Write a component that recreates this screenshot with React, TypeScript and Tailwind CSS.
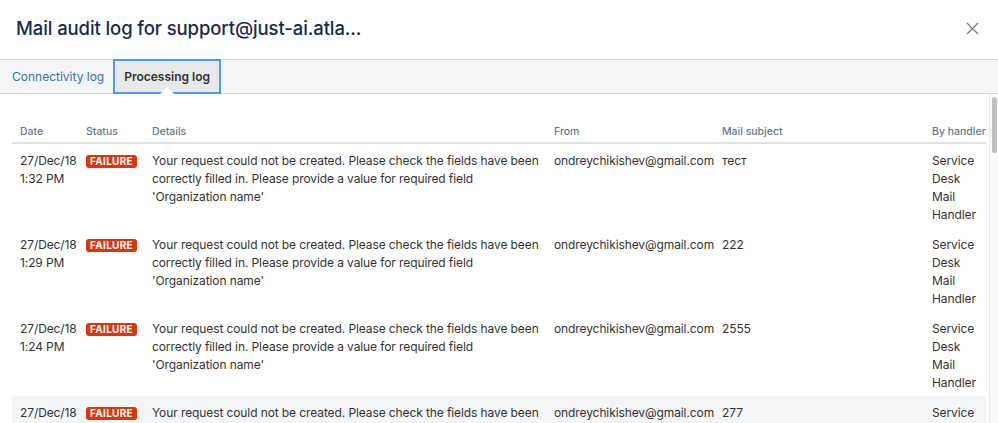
import React from 'react'
import { X } from 'lucide-react'

interface LogRow {
  date: string
  time: string
  subject: string
}

const rows: LogRow[] = [
  { date: '27/Dec/18', time: '1:32 PM', subject: 'тест' },
  { date: '27/Dec/18', time: '1:29 PM', subject: '222' },
  { date: '27/Dec/18', time: '1:24 PM', subject: '2555' },
  { date: '27/Dec/18', time: '1:21 PM', subject: '277' },
]

const details =
  "Your request could not be created. Please check the fields have been correctly filled in. Please provide a value for required field 'Organization name'"

export default function App() {
  return (
    <div className="w-[998px] h-[423px] overflow-hidden bg-white font-['Inter',sans-serif] text-[#172b4d]">
      <div className="h-[59px] flex items-center justify-between pl-4 pr-[15px] pb-[2px]">
        <h1 className="text-[18.5px] font-medium tracking-[-0.1px] text-[#172b4d]">Mail audit log for support@just-ai.atla...</h1>
        <X size={21} strokeWidth={1.3} className="text-[#6b778c]" />
      </div>

      <div className="h-[35px] flex items-stretch bg-[#f4f5f7] border-y border-[#d5d8dd] pl-[3px]">
        <div className="flex items-center px-[9px] text-[12px] text-[#3572b0]">Connectivity log</div>
        <div className="relative flex items-center px-[9px] -my-px bg-[#e9e9e9] border-2 border-[#4c9aff] text-[12px] font-semibold text-[#333]">
          Processing log
          <div className="absolute left-1/2 -translate-x-1/2 bottom-[-2px] w-0 h-0 border-x-[7px] border-x-transparent border-b-[7px] border-b-white" />
        </div>
      </div>

      <div className="flex h-[329px]">
        <div className="flex-1 pl-3 pr-[3px] pt-[23px] overflow-hidden">
          <table className="w-full table-fixed border-collapse text-[12px] leading-[18px] tracking-[-0.1px] text-[#333]">
            <colgroup>
              <col className="w-[66px]" />
              <col className="w-[66px]" />
              <col className="w-[402px]" />
              <col className="w-[168px]" />
              <col className="w-[210px]" />
              <col />
            </colgroup>
            <thead>
              <tr className="border-b-2 border-[#dfe1e6] text-left text-[10.5px] leading-[14px] tracking-normal text-[#6b778c]">
                <th className="px-2 pt-[8px] pb-[3px] font-medium">Date</th>
                <th className="px-2 pt-[8px] pb-[3px] font-medium">Status</th>
                <th className="px-2 pt-[8px] pb-[3px] font-medium">Details</th>
                <th className="px-2 pt-[8px] pb-[3px] font-medium">From</th>
                <th className="px-2 pt-[8px] pb-[3px] font-medium">Mail subject</th>
                <th className="px-2 pt-[8px] pb-[3px] font-medium whitespace-nowrap">By handler</th>
              </tr>
            </thead>
            <tbody>
              {rows.map((row, i) => (
                <tr key={i} className={i === 3 ? 'bg-[#f4f5f7]' : ''}>
                  <td className="px-2 pt-[8px] pb-[4px] align-top">
                    {row.date}
                    <br />
                    {row.time}
                  </td>
                  <td className="px-2 pt-[8px] pb-[4px] align-top">
                    <span className="inline-block rounded-[3px] bg-[#de350b] px-[4px] text-[10px] leading-[13px] font-bold tracking-[0.3px] text-white">
                      FAILURE
                    </span>
                  </td>
                  <td className="pl-2 pr-[2px] pt-[8px] pb-[4px] align-top">{details}</td>
                  <td className="px-2 pt-[8px] pb-[4px] align-top">ondreychikishev@gmail.com</td>
                  <td className="px-2 pt-[8px] pb-[4px] align-top">{row.subject}</td>
                  <td className="px-2 pt-[8px] pb-[4px] align-top">Service Desk Mail Handler</td>
                </tr>
              ))}
            </tbody>
          </table>
        </div>
        <div className="w-[9px] border-l border-[#e8e8e8] bg-[#fafafa] pt-[3px] pl-[2px] pr-[1px]">
          <div className="h-[56px] rounded-[3px] bg-[#c1c1c1]" />
        </div>
      </div>
    </div>
  )
}
